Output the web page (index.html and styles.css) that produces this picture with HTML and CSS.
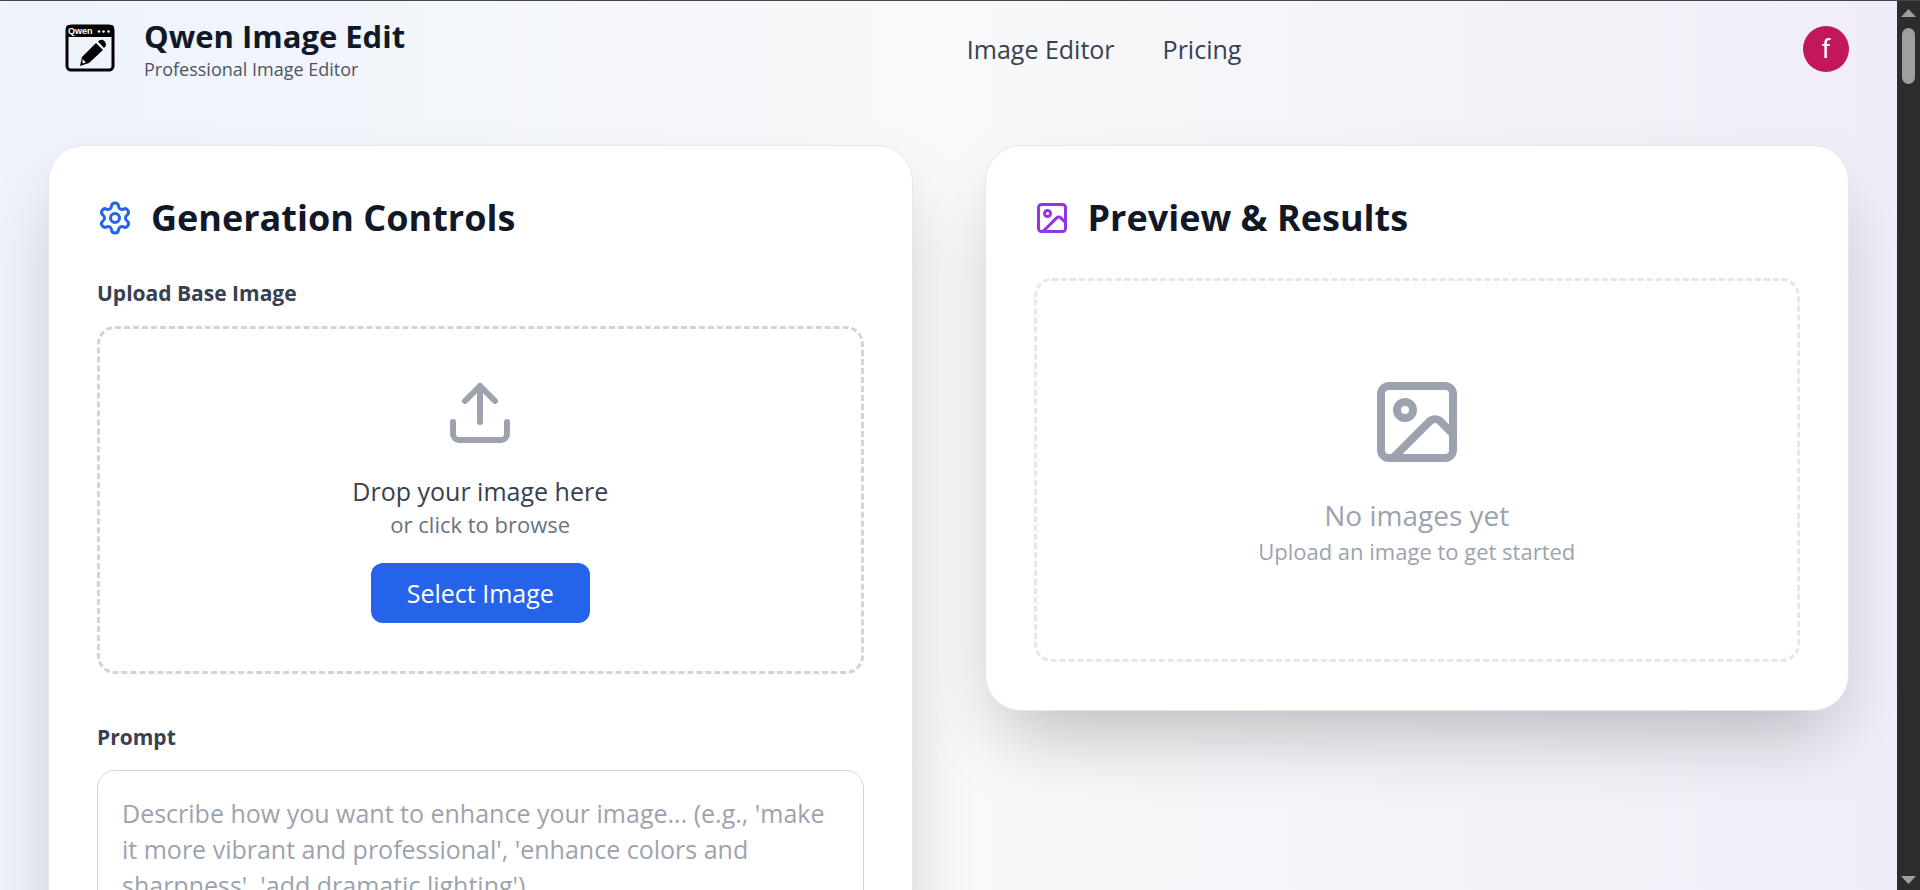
FILE: index.html
```
<!DOCTYPE html>
<html lang="en">
  <head>
    <meta charset="UTF-8" />
    <meta name="viewport" content="width=device-width, initial-scale=1.0" />
    <title>Qwen Image Edit</title>
    <link rel="stylesheet" href="styles.css">
  </head>
  <body>
    <div class="page">
      <header class="header">
        <div class="brand">
          <svg class="logo" viewBox="0 0 60 60" aria-hidden="true">
            <rect x="7" y="7" width="46" height="44" rx="4" fill="none" stroke="#000" stroke-width="3" />
            <path d="M6 18V9q0-3 3-3h42q3 0 3 3v9z" />
            <text x="8" y="15" class="logo-text">Qwen</text>
            <circle cx="39" cy="12.500" r="1.300" fill="#fff" />
            <circle cx="43.500" cy="12.500" r="1.300" fill="#fff" />
            <circle cx="48.500" cy="12.500" r="1.300" fill="#fff" />
            <path d="M20 47l2-9 14-14 7 7-14 13z" />
            <path d="M38 22.500l1.500-1.300q3-1 5 1t1 5L44 29z" />
            <path d="M22.500 40l3.500 3.500-3.500 1z" fill="#eff3fc" />
          </svg>
          <div>
            <h1>Qwen Image Edit</h1>
            <p>Professional Image Editor</p>
          </div>
        </div>
        <nav class="nav">
          <a href="#editor">Image Editor</a>
          <a href="#pricing">Pricing</a>
        </nav>
        <button class="avatar" type="button" aria-label="Account">f</button>
      </header>

      <main class="columns" id="editor">
        <section class="card">
          <h2>
            <svg class="icon gear" viewBox="0 0 24 24" aria-hidden="true">
              <path d="M9.671 4.136a2.340 2.340 0 0 1 4.659 0 2.340 2.340 0 0 0 3.319 1.915 2.340 2.340 0 0 1 2.330 4.033 2.340 2.340 0 0 0 0 3.831 2.340 2.340 0 0 1-2.330 4.033 2.340 2.340 0 0 0-3.319 1.915 2.340 2.340 0 0 1-4.659 0 2.340 2.340 0 0 0-3.320-1.915 2.340 2.340 0 0 1-2.330-4.033 2.340 2.340 0 0 0 0-3.831A2.340 2.340 0 0 1 6.350 6.051a2.340 2.340 0 0 0 3.319-1.915" />
              <circle cx="12" cy="12" r="3" />
            </svg>
            Generation Controls
          </h2>
          <h3 class="label">Upload Base Image</h3>
          <div class="dropzone">
            <svg class="icon upload" viewBox="0 0 24 24" aria-hidden="true">
              <path d="M12 3v12" />
              <path d="m17 8-5-5-5 5" />
              <path d="M21 15v4a2 2 0 0 1-2 2H5a2 2 0 0 1-2-2v-4" />
            </svg>
            <p class="drop-title">Drop your image here</p>
            <p class="hint">or click to browse</p>
            <button class="select-button" type="button">Select Image</button>
          </div>
          <label class="label" for="prompt">Prompt</label>
          <textarea id="prompt" rows="4" placeholder="Describe how you want to enhance your image... (e.g., 'make it more vibrant and professional', 'enhance colors and sharpness', 'add dramatic lighting')"></textarea>
        </section>

        <section class="card">
          <h2>
            <svg class="icon picture" viewBox="0 0 24 24" aria-hidden="true">
              <rect width="18" height="18" x="3" y="3" rx="2" ry="2" />
              <circle cx="9" cy="9" r="2" />
              <path d="m21 15-3.086-3.086a2 2 0 0 0-2.828 0L6 21" />
            </svg>
            Preview &amp; Results
          </h2>
          <div class="results">
            <svg class="icon empty" viewBox="0 0 24 24" aria-hidden="true">
              <rect width="18" height="18" x="3" y="3" rx="2" ry="2" />
              <circle cx="9" cy="9" r="2" />
              <path d="m21 15-3.086-3.086a2 2 0 0 0-2.828 0L6 21" />
            </svg>
            <p class="empty-title">No images yet</p>
            <p class="hint">Upload an image to get started</p>
          </div>
        </section>
      </main>
    </div>

    <div class="scrollbar" aria-hidden="true">
      <svg viewBox="0 0 15 8"><path d="M0 8 7.500 0 15 8z" /></svg>
      <div class="thumb"></div>
      <svg viewBox="0 0 15 8"><path d="M0 0h15L7.500 8z" /></svg>
    </div>
  </body>
</html>
```
FILE: styles.css
```
* {
  box-sizing: border-box;
}
body {
  margin: 0;
  height: 100vh;
  display: flex;
  overflow: hidden;
  border-top: 1px solid #48454c;
  font-family: "Open Sans", "Noto Sans", sans-serif;
  color: #111827;
}
h1, h2, h3, p {
  margin: 0;
}
button, textarea {
  font-family: inherit;
}
.page {
  flex: 1;
  overflow: hidden;
  background: linear-gradient(to right, #eef3fc, #f8f9fa 50%, #f1edf8);
}

/* Header */
.header {
  display: flex;
  justify-content: space-between;
  align-items: center;
  height: 96px;
  padding: 0 48px;
}
.brand {
  display: flex;
  align-items: center;
  gap: 24px;
  padding-left: 12px;
}
.logo {
  width: 60px;
  height: 60px;
}
.logo-text {
  font: bold 9px "Liberation Sans", sans-serif;
  fill: white;
}
.brand h1 {
  font-size: 31px;
  line-height: 40px;
}
.brand p {
  font-size: 18px;
  line-height: 27px;
  color: #4b5563;
}
.nav {
  display: flex;
  gap: 48px;
}
.nav a {
  font-size: 25px;
  line-height: 36px;
  color: #374151;
  text-decoration: none;
}
.avatar {
  width: 46px;
  height: 46px;
  padding: 0;
  border: none;
  border-radius: 50%;
  background-color: #c2185b;
  color: white;
  font-family: Roboto, sans-serif;
  font-size: 26px;
}

/* Cards */
.columns {
  display: grid;
  grid-template-columns: 1fr 1fr;
  align-items: start;
  gap: 72px;
  padding: 48px;
}
.card {
  padding: 48px;
  background-color: white;
  border: 1px solid #e5e7eb;
  border-radius: 36px;
  box-shadow: 0 37px 75px -18px rgba(0, 0, 0, 0.25);
}
.card h2 {
  display: flex;
  align-items: center;
  gap: 18px;
  margin-bottom: 36px;
  font-size: 36px;
  line-height: 48px;
}
.icon {
  width: 36px;
  height: 36px;
  fill: none;
  stroke: currentColor;
  stroke-width: 2;
  stroke-linecap: round;
  stroke-linejoin: round;
}
.gear {
  color: #2563eb;
}
.picture {
  color: #9333ea;
}
.label {
  display: block;
  margin-bottom: 18px;
  font-size: 21px;
  font-weight: bold;
  line-height: 30px;
  color: #374151;
}
.dropzone, .results {
  display: flex;
  flex-direction: column;
  align-items: center;
  border: 3px dashed #d1d5db;
  border-radius: 18px;
}
.dropzone {
  margin-bottom: 48px;
  padding: 48px;
}
.upload {
  width: 72px;
  height: 72px;
  margin-bottom: 24px;
  color: #9ca3af;
}
.drop-title {
  font-size: 25px;
  line-height: 36px;
  color: #374151;
}
.hint {
  font-size: 22px;
  line-height: 30px;
  color: #6b7280;
}
.select-button {
  margin-top: 24px;
  padding: 12px 36px;
  border: none;
  border-radius: 12px;
  background-color: #2563eb;
  color: white;
  font-size: 25px;
  line-height: 36px;
}
textarea {
  display: block;
  width: 100%;
  padding: 24px;
  border: 1px solid #d1d5db;
  border-radius: 18px;
  font-size: 25px;
  line-height: 36px;
  resize: none;
}
textarea::placeholder {
  color: #9ca3af;
}
.results {
  justify-content: center;
  min-height: 384px;
  border-color: #e5e7eb;
  color: #9ca3af;
}
.empty {
  width: 96px;
  height: 96px;
  margin-bottom: 24px;
}
.empty-title {
  font-size: 28px;
  line-height: 42px;
}
.results .hint {
  color: #9ca3af;
}

/* Scrollbar */
.scrollbar {
  display: flex;
  flex-direction: column;
  align-items: center;
  gap: 11px;
  width: 23px;
  padding: 8px 0 6px;
  background-color: #2c2c2c;
}
.scrollbar svg {
  width: 15px;
  height: 8px;
  fill: #9f9f9f;
}
.scrollbar svg:last-child {
  margin-top: auto;
}
.thumb {
  width: 13px;
  height: 56px;
  border-radius: 7px;
  background-color: #9f9f9f;
}
```
